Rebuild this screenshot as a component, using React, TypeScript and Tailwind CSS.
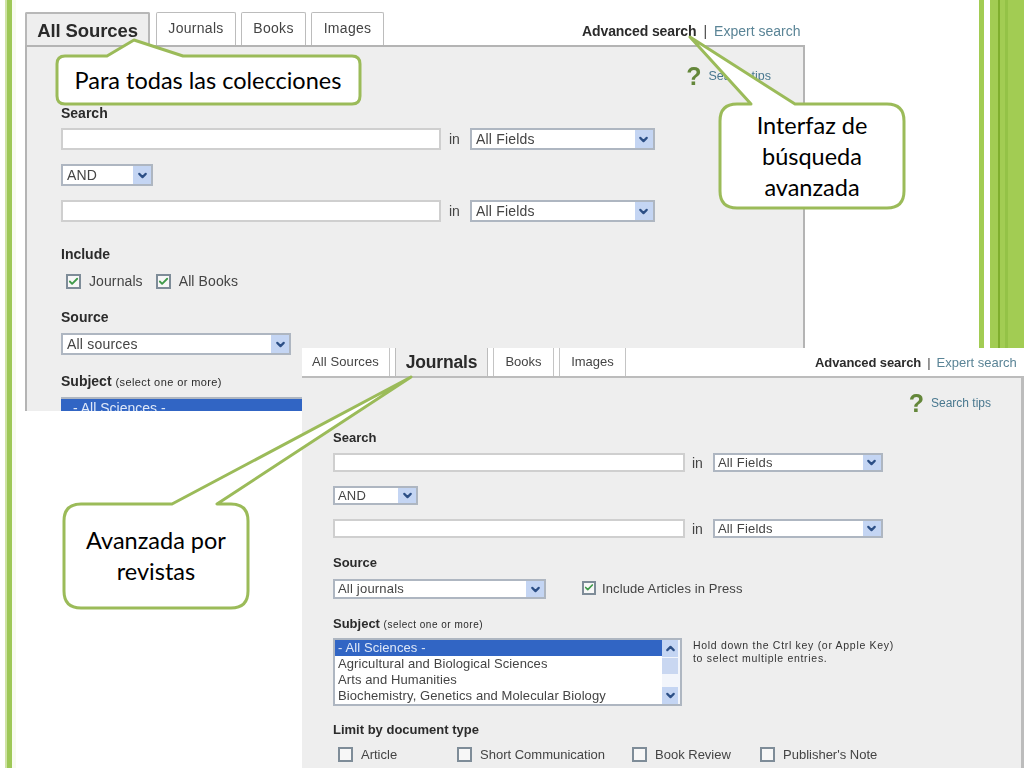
import React from "react";
import { ChevronDown, ChevronUp, Check } from "lucide-react";

const Arrow = ({ w = 18, up = false }: { w?: number; up?: boolean }) => (
  <span className="flex h-full shrink-0 items-center justify-center bg-[#c4d5f3]" style={{ width: w }}>
    {up ? <ChevronUp size={13} strokeWidth={4} color="#2c4f86" /> : <ChevronDown size={13} strokeWidth={4} color="#2c4f86" />}
  </span>
);

const Select = ({ label, w, h, small = false, className = "" }: { label: string; w: number; h: number; small?: boolean; className?: string }) => (
  <div className={`flex shrink-0 items-center justify-between border-2 border-[#aeb6c1] bg-white ${small ? "pl-[3px]" : "pl-[4px]"} ${className}`} style={{ width: w, height: h }}>
    <span className={`whitespace-nowrap tracking-[0.2px] text-[#444] ${small ? "text-[13px]" : "text-[14px]"}`}>{label}</span>
    <Arrow />
  </div>
);

const Input = ({ w, h }: { w: number; h: number }) => (
  <div className="shrink-0 border-2 border-[#cfcfcf] bg-white" style={{ width: w, height: h }} />
);

const Box = ({ checked = false, size = 15 }: { checked?: boolean; size?: number }) => (
  <span className="flex shrink-0 items-center justify-center border-2 border-[#7e8c98] bg-[#f7f7f7]" style={{ width: size, height: size }}>
    {checked && <Check size={11} strokeWidth={4} color="#3f9a4a" />}
  </span>
);

const Heading = ({ children, small = false, className = "" }: { children: React.ReactNode; small?: boolean; className?: string }) => (
  <div className={`h-4 whitespace-nowrap leading-4 font-bold text-[#2b2b2b] ${small ? "text-[13px]" : "text-[14px]"} ${className}`}>{children}</div>
);

const Tips = ({ small = false, className = "" }: { small?: boolean; className?: string }) => (
  <div className={`flex items-center justify-end gap-[7px] ${className}`}>
    <span className="text-[25px] leading-5 font-bold text-[#64873a]">?</span>
    <span className={`leading-5 text-[#49788f] ${small ? "text-[12px]" : "text-[12.5px]"}`}>Search tips</span>
  </div>
);

const Tab = ({ label, w }: { label: string; w: number }) => (
  <div className="flex h-full shrink-0 items-center justify-center rounded-t-[2px] border border-b-0 border-[#bcbcbc] bg-white pb-[1px] text-[14px] tracking-[0.3px] text-[#444]" style={{ width: w }}>
    {label}
  </div>
);

const Row = ({ gap, inW, selW, h, mt, rowGap, small = false }: { gap: number; inW: number; selW: number; h: number; mt: number; rowGap: number; small?: boolean }) => (
  <div className="flex items-center" style={{ marginTop: mt, height: h }}>
    <Input w={inW} h={h} />
    <span className="text-[14px] leading-none text-[#444]" style={{ marginLeft: gap, marginRight: rowGap }}>in</span>
    <Select label="All Fields" w={selW} h={h} small={small} />
  </div>
);

const Labeled = ({ label, checked = false, small = false }: { label: string; checked?: boolean; small?: boolean }) => (
  <div className="flex items-center gap-[8px]">
    <Box checked={checked} />
    <span className={`whitespace-nowrap text-[#444] ${small ? "text-[13px] leading-none" : "text-[14px] tracking-[0.1px]"}`}>{label}</span>
  </div>
);

const AdvancedLinks = ({ small = false, className = "" }: { small?: boolean; className?: string }) => (
  <div className={`flex items-center ${small ? "text-[13px]" : "text-[14px]"} ${className}`}>
    <span className="font-bold tracking-[-0.1px] text-[#2b2b2b]">Advanced search</span>
    <span className={`text-[#444] ${small ? "mx-[6px]" : "mx-[7px]"}`}>|</span>
    <span className="text-[#5a8496]">Expert search</span>
  </div>
);

function WindowAll() {
  return (
    <div className="absolute top-[12px] left-[25px] flex h-[399px] w-[780px] flex-col overflow-hidden bg-white blur-[0.4px]">
      <div className="relative flex h-[33px] shrink-0 items-stretch">
        <div className="flex w-[125px] shrink-0 items-center justify-center rounded-t-[2px] border-2 border-b-0 border-[#b8b8b8] bg-[#eeeeee] pt-[3px] text-[18.5px] font-bold tracking-[-0.1px] text-[#2a2a2a]">All Sources</div>
        <div className="ml-[6px] flex gap-[5px]">
          <Tab label="Journals" w={80} />
          <Tab label="Books" w={65} />
          <Tab label="Images" w={73} />
        </div>
        <AdvancedLinks className="ml-[198px] pt-[6px]" />
      </div>
      <div className="flex flex-1 flex-col border-x-2 border-t-2 border-[#b4b4b4] bg-[#eeeeee] pl-[34px]">
        <Tips className="mt-[19px] pr-[32px]" />
        <Heading className="mt-[19px]">Search</Heading>
        <Row gap={8} rowGap={10} inW={380} selW={185} h={22} mt={7} />
        <Select label="AND" w={92} h={22} className="mt-[14px]" />
        <Row gap={8} rowGap={10} inW={380} selW={185} h={22} mt={14} />
        <Heading className="mt-[24px]">Include</Heading>
        <div className="mt-[12px] flex h-[15px] gap-[13px] pl-[5px]">
          <Labeled label="Journals" checked />
          <Labeled label="All Books" checked />
        </div>
        <Heading className="mt-[20px]">Source</Heading>
        <Select label="All sources" w={230} h={22} className="mt-[8px]" />
        <Heading className="mt-[18px]">
          Subject <span className="text-[11px] font-normal tracking-[0.4px]">(select one or more)</span>
        </Heading>
        <div className="mt-[8px] h-[40px] w-[400px] shrink-0 border-t-2 border-[#aeb6c1] bg-[#3165c4] pl-[12px] text-[14px] leading-[18px] text-[#dfe8f8]">- All Sciences -</div>
      </div>
    </div>
  );
}

function WindowJournals() {
  return (
    <div className="absolute top-[348px] left-[302px] flex h-[420px] w-[722px] flex-col overflow-hidden bg-white blur-[0.4px]">
      <div className="flex h-[28px] shrink-0 items-center gap-[5px] text-[13px] text-[#444]">
        <div className="flex h-full w-[88px] shrink-0 items-center border-r border-[#c4c4c4] pl-[10px] tracking-[0.1px]">All Sources</div>
        <div className="flex h-full w-[93px] shrink-0 items-center justify-center border-x border-[#bcbcbc] bg-[#eeeeee] text-[17.5px] font-bold tracking-[-0.2px] text-[#2a2a2a]">Journals</div>
        <div className="flex h-full w-[61px] shrink-0 items-center justify-center border-x border-[#c4c4c4]">Books</div>
        <div className="flex h-full w-[67px] shrink-0 items-center justify-center border-x border-[#c4c4c4]">Images</div>
        <AdvancedLinks small className="ml-[184px] pt-[2px]" />
      </div>
      <div className="flex flex-1 flex-col border-t-2 border-r-[3px] border-[#bcbcbc] bg-[#eeeeee] pl-[31px]">
        <Tips small className="mt-[15px] pr-[30px]" />
        <Heading small className="mt-[17px]">Search</Heading>
        <Row gap={7} rowGap={10} inW={352} selW={170} h={19} mt={7} small />
        <Select label="AND" w={85} h={19} small className="mt-[14px]" />
        <Row gap={7} rowGap={10} inW={352} selW={170} h={19} mt={14} small />
        <Heading small className="mt-[17px]">Source</Heading>
        <div className="mt-[8px] flex h-[20px] items-center">
          <Select label="All journals" w={213} h={20} small />
          <div className="ml-[36px] flex items-center gap-[6px]">
            <span className="-mt-[3px]"><Box checked size={14} /></span>
            <span className="text-[13px] tracking-[0.1px] whitespace-nowrap text-[#444]">Include Articles in Press</span>
          </div>
        </div>
        <Heading small className="mt-[17px]">
          Subject <span className="text-[10px] font-normal tracking-[0.5px]">(select one or more)</span>
        </Heading>
        <div className="mt-[6px] flex items-start">
          <div className="flex h-[68px] w-[349px] shrink-0 border-2 border-[#aeb6c1] bg-white">
            <div className="min-w-0 flex-1 text-[13px] leading-4 tracking-[0.1px] text-[#444]">
              <div className="bg-[#3165c4] pl-[3px] text-[#dfe8f8]">- All Sciences -</div>
              <div className="pl-[3px]">Agricultural and Biological Sciences</div>
              <div className="pl-[3px]">Arts and Humanities</div>
              <div className="pl-[3px] whitespace-nowrap">Biochemistry, Genetics and Molecular Biology</div>
            </div>
            <div className="flex w-[18px] shrink-0 flex-col bg-[#f2f5fb]">
              <div className="h-[17px]"><Arrow w={16} up /></div>
              <div className="mt-[1px] h-[16px] w-[16px] bg-[#c9d7f1]" />
              <div className="flex-1" />
              <div className="h-[17px]"><Arrow w={16} /></div>
            </div>
          </div>
          <div className="ml-[11px] pt-[1px] text-[10.5px] leading-[13px] tracking-[0.7px] whitespace-nowrap text-[#333]">
            Hold down the Ctrl key (or Apple Key)<br />to select multiple entries.
          </div>
        </div>
        <Heading small className="mt-[16px]">Limit by document type</Heading>
        <div className="mt-[9px] flex h-[15px] pl-[5px]">
          <div className="w-[119px]"><Labeled label="Article" small /></div>
          <div className="w-[175px]"><Labeled label="Short Communication" small /></div>
          <div className="w-[128px]"><Labeled label="Book Review" small /></div>
          <Labeled label="Publisher's Note" small />
        </div>
      </div>
    </div>
  );
}

const Callouts = () => (
  <svg className="pointer-events-none absolute inset-0" width="1024" height="768" viewBox="0 0 1024 768">
    <g fill="#ffffff" stroke="#9bbb59" strokeWidth="3" strokeLinejoin="round">
      <path d="M65 56 H107 L134 40 L183 56 H352 Q360 56 360 64 V96 Q360 104 352 104 H65 Q57 104 57 96 V64 Q57 56 65 56 Z" />
      <path d="M737 104 H751 L690 37 L795 104 H887 Q904 104 904 121 V191 Q904 208 887 208 H737 Q720 208 720 191 V121 Q720 104 737 104 Z" />
      <path d="M81 504 H172 L411 377 L217 504 H231 Q248 504 248 521 V591 Q248 608 231 608 H81 Q64 608 64 591 V521 Q64 504 81 504 Z" />
    </g>
  </svg>
);

const Note = ({ className, children }: { className: string; children: React.ReactNode }) => (
  <div className={`absolute flex items-center justify-center text-center font-['Lato',sans-serif] text-[23.5px] leading-[31px] text-black ${className}`}>
    {children}
  </div>
);

export default function App() {
  return (
    <div className="relative h-[768px] w-[1024px] overflow-hidden bg-white font-['Liberation_Sans',Arial,sans-serif]">
      <div className="absolute inset-y-0 left-[5px] flex">
        <div className="w-[2px] bg-[#cfe3a4]" />
        <div className="w-[5px] bg-[#9ec857]" />
        <div className="w-[4px] bg-[#f8fbf0]" />
      </div>
      <div className="absolute top-0 right-0 flex h-[348px]">
        <div className="w-[5px] bg-[#a2cc53]" />
        <div className="w-[6px] bg-white" />
        <div className="w-[8px] bg-[#a2cc53]" />
        <div className="w-[2px] bg-[#7fae2e]" />
        <div className="w-[5px] bg-[#a2cc53]" />
        <div className="w-[3px] bg-[#94c247]" />
        <div className="w-[16px] bg-[#a2cc53]" />
      </div>
      <WindowAll />
      <WindowJournals />
      <Callouts />
      <Note className="top-[56px] left-[56px] h-[48px] w-[304px] whitespace-nowrap">Para todas las colecciones</Note>
      <Note className="top-[104px] left-[720px] h-[104px] w-[184px]">Interfaz de<br />búsqueda<br />avanzada</Note>
      <Note className="top-[504px] left-[64px] h-[104px] w-[184px]">Avanzada por<br />revistas</Note>
    </div>
  );
}
